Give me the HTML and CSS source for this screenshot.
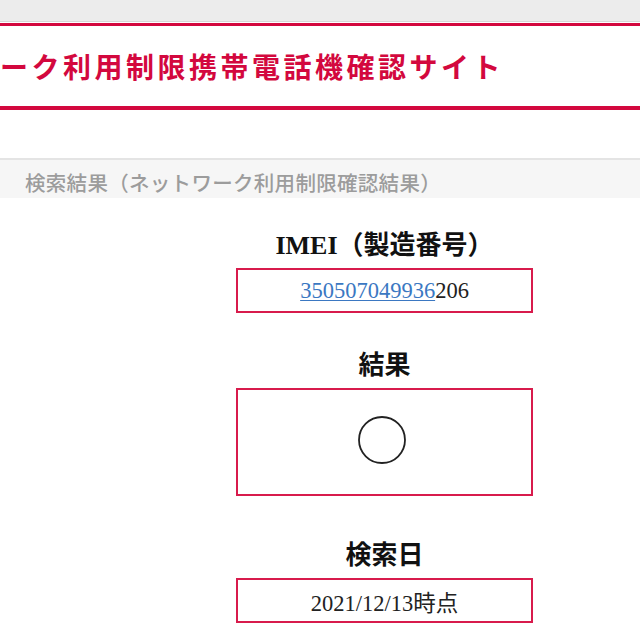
FILE: index.html
```html
<!DOCTYPE html>
<html lang="ja">
<head>
<meta charset="utf-8">
<title>ネットワーク利用制限携帯電話機確認サイト</title>
<link rel="stylesheet" href="styles.css">
</head>
<body>
<div class="topbar"></div>
<header class="site-header">
  <h1 class="site-title">ネットワーク利用制限携帯電話機確認サイト</h1>
</header>
<section class="result-section">
  <h2 class="section-title">検索結果（ネットワーク利用制限確認結果）</h2>
</section>
<main class="results">
  <div class="field">
    <h3 class="field-label"><span class="latin">IMEI</span>（製造番号）</h3>
    <div class="field-box"><a class="imei-link" href="#">350507049936</a>206</div>
  </div>
  <div class="field">
    <h3 class="field-label">結果</h3>
    <div class="field-box field-box-tall">
      <svg class="mark" width="50" height="50" viewBox="0 0 50 50" aria-label="○"><circle cx="25" cy="25" r="23" fill="none" stroke="#222" stroke-width="1.8"/></svg>
    </div>
  </div>
  <div class="field field-date">
    <h3 class="field-label">検索日</h3>
    <div class="field-box">2021/12/13時点</div>
  </div>
</main>
</body>
</html>
```
FILE: styles.css
```css
html, body {
  margin: 0;
  padding: 0;
  background: #fff;
}
body {
  width: 640px;
  overflow: hidden;
  font-family: "Liberation Serif", "Noto Sans CJK JP", serif;
  color: #222;
}
.topbar {
  height: 21px;
  background: #ececec;
  border-bottom: 1px solid #d6d6d6;
  margin-bottom: 1px;
}
.site-header {
  height: 80px;
  border-top: 3px solid #d3083e;
  border-bottom: 4px solid #d3083e;
  display: flex;
  align-items: center;
  overflow: hidden;
}
.site-title {
  margin: 0 0 0 -126px;
  white-space: nowrap;
  font-family: "Noto Sans CJK JP", sans-serif;
  font-weight: 700;
  font-size: 28px;
  letter-spacing: 3.5px;
  line-height: 1;
  color: #d3083e;
}
.result-section {
  margin-top: 48px;
  border-top: 2px solid #e4e4e4;
  background: #f6f6f6;
  height: 40px;
  box-sizing: border-box;
  display: flex;
  align-items: center;
  padding: 6px 0 0 25px;
}
.section-title {
  margin: 0;
  font-family: "Noto Sans CJK JP", sans-serif;
  font-weight: 500;
  font-size: 20.5px;
  letter-spacing: 0.3px;
  line-height: 1;
  color: #9c9c9c;
  white-space: nowrap;
}
.results {
  padding: 33px 0 0 236px;
  display: flex;
  flex-direction: column;
  gap: 38px;
}
.field {
  width: 297px;
  display: flex;
  flex-direction: column;
  align-items: center;
  gap: 7px;
}
.field-date {
  margin-top: 7px;
}
.field-label {
  margin: 0;
  font-size: 26px;
  line-height: 30px;
  height: 30px;
  font-weight: 700;
  color: #111;
  white-space: nowrap;
}
.field-box {
  box-sizing: border-box;
  width: 297px;
  height: 45px;
  border: 2px solid #d81b4c;
  display: flex;
  align-items: center;
  justify-content: center;
  font-size: 22.5px;
  color: #222;
}
.field-box-tall {
  height: 108px;
}
.imei-link {
  color: #3b78c2;
  text-decoration: underline;
  text-decoration-thickness: 1px;
  text-underline-offset: 2px;
}
.mark {
  display: block;
  margin-left: -6px;
  margin-top: -4px;
}
```
